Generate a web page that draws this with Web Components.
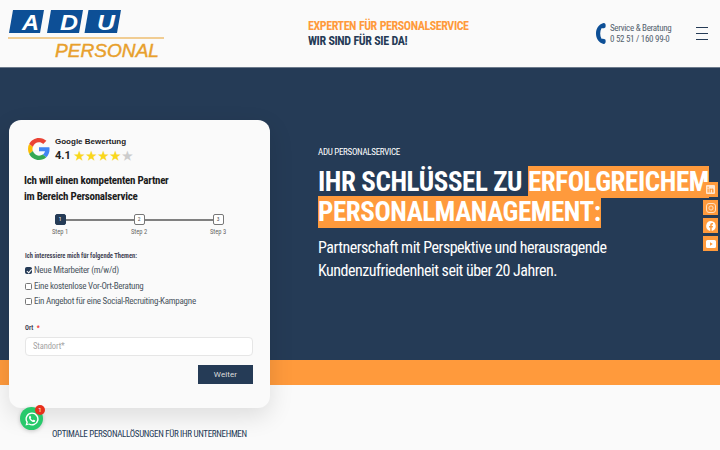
<!DOCTYPE html>
<html lang="de">
<head>
<meta charset="utf-8">
<title>ADU Personal</title>
<style>
  html, body { margin: 0; padding: 0; }
  body { width: 720px; height: 450px; overflow: hidden; background: #fafafa; font-family: Roboto, "Liberation Sans", sans-serif; position: relative; }
</style>
</head>
<body>
<site-header></site-header>
<hero-section></hero-section>
<orange-band></orange-band>
<intro-line>OPTIMALE PERSONALLÖSUNGEN FÜR IHR UNTERNEHMEN</intro-line>
<lead-card></lead-card>
<social-bar></social-bar>
<chat-bubble></chat-bubble>

<script>
const navy = "#253b56";
const orange = "#ff9a3c";

class SiteHeader extends HTMLElement {
  constructor() {
    super();
    this.attachShadow({ mode: "open" });
  }
  connectedCallback() {
    this.shadowRoot.innerHTML = `
      <style>
        :host { display: flex; height: 67px; align-items: center; background: #fafafa; border-bottom: 1px solid #6d7b8c; box-sizing: content-box; }
        .logo { width: 308px; flex: none; padding-left: 8px; box-sizing: border-box; }
        .logo svg { display: block; }
        .claim { flex: 1; font-size: 12px; font-weight: 700; line-height: 15px; font-stretch: 75%; letter-spacing: -.42px; word-spacing: .5px; }
        .claim div:first-child { color: ${orange}; }
        .claim div:last-child { color: ${navy}; }
        .phone { display: flex; align-items: center; gap: 4px; width: 100px; margin-left: -1px; color: #55626f; font-size: 9px; line-height: 11px; font-stretch: 75%; letter-spacing: -.3px; }
        .burger { width: 12px; margin-right: 12px; display: grid; gap: 5px; }
        .burger i { display: block; height: 1px; background: #253b56; }
      </style>
      <div class="logo">
        <svg width="156" height="61" viewBox="0 0 156 61">
          <g fill="#0d4f96">
            <path d="M5 7H36L32 30H1Z"/>
            <path d="M43 7H75L71 30H39Z"/>
            <path d="M80.500 7H113L109 30H76.500Z"/>
          </g>
          <g fill="#fff" font-family="Liberation Sans" font-style="italic" font-weight="700" font-size="22" lengthAdjust="spacingAndGlyphs">
            <text x="14" y="27" textLength="17" lengthAdjust="spacingAndGlyphs">A</text>
            <text x="52" y="27" textLength="18" lengthAdjust="spacingAndGlyphs">D</text>
            <text x="89" y="27" textLength="18" lengthAdjust="spacingAndGlyphs">U</text>
          </g>
          <rect x="0" y="34.500" width="156" height="1" fill="#e8a02c"/>
          <text x="47" y="54" fill="#e8a02c" stroke="#e8a02c" stroke-width=".4" font-family="Liberation Sans" font-style="italic" font-size="18" textLength="104" lengthAdjust="spacingAndGlyphs">PERSONAL</text>
        </svg>
      </div>
      <div class="claim">
        <div>EXPERTEN FÜR PERSONALSERVICE</div>
        <div>WIR SIND FÜR SIE DA!</div>
      </div>
      <div class="phone">
        <svg width="10" height="21" viewBox="0 0 10 21"><path d="M7.500 0C2.500 1.500 0 5.500 0 10.500C0 15.500 2.500 19.500 7.500 21C9.500 21 10 19.500 9.500 16.800C8.800 15.800 7.500 15.800 5.500 15.800C3.800 12.500 3.800 8.500 5.500 5.200C7.500 5.200 8.800 5.200 9.500 4.200C10 1.500 9.500 0 7.500 0Z" fill="#0d4f96"/></svg>
        <div>Service &amp; Beratung<br>0 52 51 / 160 99-0</div>
      </div>
      <div class="burger"><i></i><i></i><i></i></div>
    `;
  }
}

class HeroSection extends HTMLElement {
  constructor() {
    super();
    this.attachShadow({ mode: "open" });
  }
  connectedCallback() {
    this.shadowRoot.innerHTML = `
      <style>
        :host { display: block; height: 292px; background: ${navy}; color: #fff; padding: 78px 0 0 318px; box-sizing: border-box; font-stretch: 75%; }
        .eyebrow { font-size: 9px; line-height: 12px; letter-spacing: -.3px; }
        h1 { margin: 9px 0 0; font-size: 27px; line-height: 30px; font-weight: 700; white-space: nowrap; letter-spacing: -.42px; }
        h1 span { background: ${orange}; padding: 0; }
        p { margin: 10px 0 0; font-size: 16px; line-height: 22.500px; white-space: nowrap; letter-spacing: -.5px; }
      </style>
      <div class="eyebrow">ADU PERSONALSERVICE</div>
      <h1>IHR SCHLÜSSEL ZU <span>ERFOLGREICHEM<br>PERSONALMANAGEMENT:</span></h1>
      <p>Partnerschaft mit Perspektive und herausragende<br>Kundenzufriedenheit seit über 20 Jahren.</p>
    `;
  }
}

class OrangeBand extends HTMLElement {
  constructor() {
    super();
    this.attachShadow({ mode: "open" }).innerHTML = `<style>:host { display: block; height: 25px; background: ${orange}; }</style>`;
  }
}

class IntroLine extends HTMLElement {
  constructor() {
    super();
    this.attachShadow({ mode: "open" }).innerHTML = `
      <style>:host { display: block; padding: 43px 0 0 52px; font-size: 9px; line-height: 12px; letter-spacing: -.33px; color: ${navy}; font-stretch: 75%; }</style>
      <slot></slot>`;
  }
}

class LeadCard extends HTMLElement {
  constructor() {
    super();
    this.attachShadow({ mode: "open" });
  }
  connectedCallback() {
    this.shadowRoot.innerHTML = `
      <style>
        :host { position: absolute; left: 9px; top: 120px; width: 261px; height: 288px; box-sizing: border-box; background: #fafafa; border-radius: 12px; box-shadow: 0 8px 24px rgba(0,0,0,.12); padding: 15px 17px 0 16px; color: ${navy}; font-stretch: 75%; }
        .rating { display: flex; gap: 5px; padding-left: 3px; align-items: center; }
        .rating b { display: block; font: 700 8px/11px "Liberation Sans", sans-serif; color: #222; padding-top: 1px; }
        .score { display: flex; align-items: center; gap: 3px; font: 700 11px/14px Roboto, sans-serif; color: #222; margin-top: 2px; }
        .stars { display: flex; font-size: 12px; line-height: 12px; color: #f9d71c; }
        .stars span { display: block; width: 12px; text-align: center; }
        .stars i { font-style: normal; color: #ccc; display: block; width: 12px; text-align: center; }
        h2 { margin: 10px 0 0 -1px; font-size: 11px; line-height: 16px; font-weight: 700; color: #1c1c1c; letter-spacing: -.27px; }
        .steps { display: flex; justify-content: space-between; margin: 9px 0 0; padding: 0 20px; position: relative; }
        .steps::before { content: ""; position: absolute; left: 34px; right: 34px; top: 5px; height: 2px; background: #808080; }
        .step { width: 30px; display: grid; justify-items: center; gap: 3px; position: relative; font-size: 6.500px; line-height: 8px; color: #666; }
        .num { width: 11px; height: 11px; box-sizing: border-box; border: 1px solid #777; border-radius: 2px; background: #fff; text-align: center; line-height: 9px; font-size: 5.500px; color: #444; }
        .on .num { background: ${navy}; border-color: ${navy}; color: #fff; }
        .topic { margin: 16px 0 0; font-size: 6.500px; line-height: 8px; font-weight: 700; color: #445; }
        label { display: flex; align-items: center; gap: 1px; font-size: 9px; line-height: 15.500px; letter-spacing: -.25px; color: #4a5560; }
        .list { margin-top: 3px; }
        input[type=checkbox] { appearance: none; width: 7px; height: 7px; box-sizing: border-box; margin: 0 1px 0 0; border: 1px solid #767676; border-radius: 1.500px; background: #fff; position: relative; }
        input[type=checkbox]:checked { background: ${navy}; border-color: ${navy}; }
        input[type=checkbox]:checked::before { content: ""; position: absolute; left: 1.500px; top: -.5px; width: 1.500px; height: 3.500px; border: solid #fff; border-width: 0 1px 1px 0; transform: rotate(40deg); }
        .ort { margin: 14px 0 0; font-size: 6.500px; line-height: 8px; font-weight: 700; color: #445; }
        .ort em { color: #e33; font-style: normal; margin-left: 2px; }
        .field { margin-top: 5px; height: 19px; background: #fff; border: 1px solid #e6e6e6; border-radius: 4px; box-sizing: border-box; padding-left: 7px; font-size: 8.500px; letter-spacing: -.1px; line-height: 17px; color: #a5a5a5; }
        .go { display: block; margin: 9px 0 0 auto; width: 55px; height: 19px; border: 0; background: ${navy}; color: #ddd; font: 400 8px Roboto, sans-serif; letter-spacing: .1px; padding: 0; }
      </style>
      <div class="rating">
        <svg width="22" height="22" viewBox="0 0 48 48">
          <path fill="#EA4335" d="M24 9.500c3.500 0 6.700 1.200 9.200 3.600l6.900-6.900C35.900 2.400 30.400 0 24 0 14.600 0 6.500 5.400 2.600 13.200l8 6.200C12.500 13.600 17.800 9.500 24 9.500z"/>
          <path fill="#4285F4" d="M47 24.500c0-1.600-.1-3.100-.4-4.500H24v9h13c-.6 3-2.200 5.500-4.800 7.200l7.700 6c4.500-4.200 7.100-10.300 7.100-17.700z"/>
          <path fill="#FBBC05" d="M10.500 28.600c-.5-1.400-.8-3-.8-4.600s.3-3.200.8-4.600l-8-6.200C.9 16.500 0 20.100 0 24s.9 7.500 2.600 10.800l7.900-6.200z"/>
          <path fill="#34A853" d="M24 48c6.500 0 11.900-2.100 15.900-5.800l-7.700-6c-2.200 1.400-4.900 2.300-8.200 2.300-6.200 0-11.500-4.200-13.400-9.900l-8 6.200C6.500 42.600 14.600 48 24 48z"/>
        </svg>
        <div>
          <b>Google Bewertung</b>
          <div class="score">4.1 <div class="stars"><span>★</span><span>★</span><span>★</span><span>★</span><i>★</i></div></div>
        </div>
      </div>
      <h2>Ich will einen kompetenten Partner<br>im Bereich Personalservice</h2>
      <div class="steps">
        <div class="step on"><span class="num">1</span>Step 1</div>
        <div class="step"><span class="num">2</span>Step 2</div>
        <div class="step"><span class="num">3</span>Step 3</div>
      </div>
      <div class="topic">Ich interessiere mich für folgende Themen:</div>
      <div class="list">
        <label><input type="checkbox" checked>Neue Mitarbeiter (m/w/d)</label>
        <label><input type="checkbox">Eine kostenlose Vor-Ort-Beratung</label>
        <label><input type="checkbox">Ein Angebot für eine Social-Recruiting-Kampagne</label>
      </div>
      <div class="ort">Ort <em>*</em></div>
      <div class="field">Standort*</div>
      <button class="go">Weiter</button>
    `;
  }
}

class SocialBar extends HTMLElement {
  constructor() {
    super();
    this.attachShadow({ mode: "open" });
  }
  connectedCallback() {
    this.shadowRoot.innerHTML = `
      <style>
        :host { position: absolute; right: 2px; top: 182px; display: grid; gap: 3px; }
        a { width: 15px; height: 15px; background: ${orange}; display: grid; place-items: center; }
        svg { display: block; }
      </style>
      <a><svg width="9" height="9" viewBox="0 0 9 9"><path fill="#ffe6cf" fill-rule="evenodd" d="M1 0H8a1 1 0 0 1 1 1V8a1 1 0 0 1-1 1H1a1 1 0 0 1-1-1V1a1 1 0 0 1 1-1ZM1.500 3.500V7.500H2.700V3.500ZM2.100 1.500a.7.7 0 1 0 0 1.400a.7.7 0 0 0 0-1.400ZM3.600 3.500V7.500H4.800V5.400C4.800 4.300 6.100 4.300 6.100 5.400V7.500H7.500V5C7.500 3.200 5.500 3.200 4.800 4V3.500Z"/></svg></a>
      <a><svg width="10" height="10" viewBox="0 0 10 10" fill="none" stroke="#ffe6cf" stroke-width=".9"><rect x=".5" y=".5" width="9" height="9" rx="2.500"/><circle cx="5" cy="5" r="2.100"/></svg></a>
      <a><svg width="10" height="10" viewBox="0 0 10 10"><path fill="#fff" d="M5 0a5 5 0 0 0-.8 9.900V6.500H3V5H4.200V3.900C4.200 2.700 5 2 6 2L7 2.100V3.400H6.400C5.800 3.400 5.700 3.700 5.700 4.100V5H7L6.800 6.500H5.700V9.900A5 5 0 0 0 5 0Z"/></svg></a>
      <a><svg width="10" height="8" viewBox="0 0 10 8"><path fill="#fff" d="M1.500 0H8.500A1.500 1.500 0 0 1 10 1.500V6.500A1.500 1.500 0 0 1 8.500 8H1.500A1.500 1.500 0 0 1 0 6.500V1.500A1.500 1.500 0 0 1 1.500 0ZM4 2.300V5.700L6.800 4Z" fill-rule="evenodd"/></svg></a>
    `;
  }
}

class ChatBubble extends HTMLElement {
  constructor() {
    super();
    this.attachShadow({ mode: "open" });
  }
  connectedCallback() {
    this.shadowRoot.innerHTML = `
      <style>
        :host { position: absolute; left: 20px; top: 407px; width: 23px; height: 23px; border-radius: 50%; background: #27c96b; display: grid; place-items: center; box-shadow: 0 1px 4px rgba(0,0,0,.2); }
        span { position: absolute; right: -2px; top: -2px; width: 10px; height: 10px; border-radius: 50%; background: #e8301c; color: #fff; font-size: 6px; line-height: 10px; text-align: center; }
      </style>
      <svg width="14" height="14" viewBox="0 0 14 14"><path fill="#fff" fill-rule="evenodd" d="M7 .5A6.500 6.500 0 0 0 1.400 10.300L.5 13.500L3.800 12.600A6.500 6.500 0 1 0 7 .5ZM7 1.800A5.200 5.200 0 1 1 4.200 11.400L2.400 11.900L2.900 10.100A5.200 5.200 0 0 1 7 1.800ZM5 3.800C4.700 3.800 4 4.400 4 5.400C4 6.800 5.700 9 7.700 9.900C9.300 10.500 10 9.700 10.100 9C10.200 8.500 10.100 8.400 9.900 8.300L8.800 7.700C8.500 7.600 8.400 7.700 8.200 8C8 8.300 7.800 8.400 7.500 8.300C6.700 7.900 6.100 7.300 5.700 6.600C5.600 6.300 6.200 6 6.200 5.600L5.600 4.100C5.500 3.800 5.300 3.800 5 3.800Z"/></svg>
      <span>1</span>
    `;
  }
}

customElements.define("site-header", SiteHeader);
customElements.define("hero-section", HeroSection);
customElements.define("orange-band", OrangeBand);
customElements.define("intro-line", IntroLine);
customElements.define("lead-card", LeadCard);
customElements.define("social-bar", SocialBar);
customElements.define("chat-bubble", ChatBubble);
</script>
</body>
</html>
